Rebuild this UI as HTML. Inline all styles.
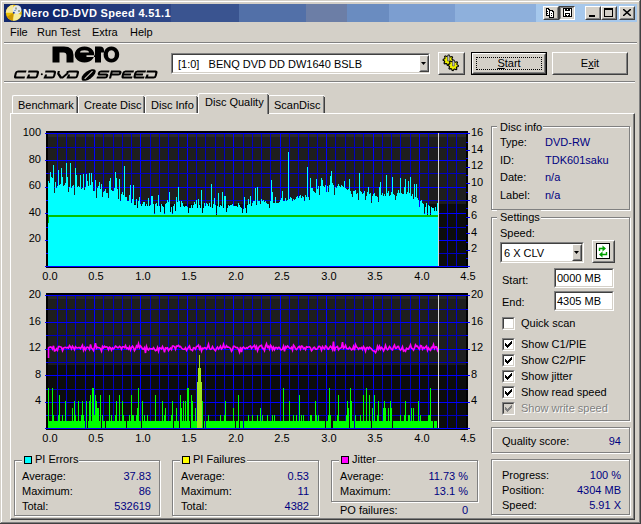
<!DOCTYPE html><html><head><meta charset="utf-8"><style>
html,body{margin:0;padding:0;width:641px;height:524px;overflow:hidden;background:#D4D0C8}
body{position:relative;font-family:'Liberation Sans', sans-serif}
</style></head><body><div style="position:absolute;left:0px;top:0px;width:641px;height:524px;background:#D4D0C8"></div>
<div style="position:absolute;left:0px;top:0px;width:641px;height:1px;background:#D4D0C8"></div>
<div style="position:absolute;left:0px;top:0px;width:1px;height:524px;background:#D4D0C8"></div>
<div style="position:absolute;left:1px;top:1px;width:639px;height:1px;background:#fff"></div>
<div style="position:absolute;left:1px;top:1px;width:1px;height:522px;background:#fff"></div>
<div style="position:absolute;left:640px;top:0px;width:1px;height:524px;background:#404040"></div>
<div style="position:absolute;left:0px;top:523px;width:641px;height:1px;background:#404040"></div>
<div style="position:absolute;left:639px;top:1px;width:1px;height:522px;background:#808080"></div>
<div style="position:absolute;left:1px;top:522px;width:639px;height:1px;background:#808080"></div>
<div style="position:absolute;left:4px;top:4px;width:86px;height:18px;background:#12286C"></div>
<div style="position:absolute;left:90px;top:4px;width:40px;height:18px;background:#233A7C"></div>
<div style="position:absolute;left:130px;top:4px;width:41px;height:18px;background:#2E4686"></div>
<div style="position:absolute;left:171px;top:4px;width:68px;height:18px;background:#3A5490"></div>
<div style="position:absolute;left:239px;top:4px;width:67px;height:18px;background:#5270A8"></div>
<div style="position:absolute;left:306px;top:4px;width:41px;height:18px;background:#6C7EA6"></div>
<div style="position:absolute;left:347px;top:4px;width:42px;height:18px;background:#6A8CC0"></div>
<div style="position:absolute;left:389px;top:4px;width:66px;height:18px;background:#7C9ED0"></div>
<div style="position:absolute;left:455px;top:4px;width:81px;height:18px;background:#8EB0DC"></div>
<div style="position:absolute;left:536px;top:4px;width:101px;height:18px;background:#A6C8EC"></div>
<div style="position:absolute;left:23px;top:7px;font:bold 11px/13px 'Liberation Sans', sans-serif;color:#fff;white-space:pre;letter-spacing:0.3px">Nero CD-DVD Speed 4.51.1</div>
<svg style="position:absolute;left:5px;top:4px" width="17" height="17" viewBox="0 0 17 17"><circle cx="8.8" cy="8.8" r="8" fill="#ECC000"/><path d="M8.8 8.8L0.80 8.80A8 8 0 0 1 8.10 0.83Z" fill="#F6E89A"/><path d="M8.8 8.8L16.53 10.87A8 8 0 0 1 8.10 16.77Z" fill="#F6EC9A"/><path d="M8.8 8.8L7.41 16.68A8 8 0 0 1 1.87 12.80Z" fill="#CC9600"/><circle cx="12" cy="5.6" r="4.4" fill="#E4E8EC"/><path d="M10 3.5h2v2h-2zM13 6h2v2h-2z" fill="#A0A890"/><path d="M9 6h2v1h-2z" fill="#80A8D8"/><circle cx="8.8" cy="8.8" r="1" fill="#2040A0"/></svg>
<div style="position:absolute;left:543px;top:6px;width:16px;height:14px;box-sizing:border-box;border-style:solid;border-width:1px;border-color:#fff #404040 #404040 #fff;background:#D4D0C8"><div style="position:absolute;left:0;top:0;right:0;bottom:0;border-style:solid;border-width:1px;border-color:#D4D0C8 #808080 #808080 #D4D0C8"></div><svg style="position:absolute;left:2px;top:1px" width="11" height="11" shape-rendering="crispEdges"><rect x="0" y="0" width="1" height="1" fill="#000"/><rect x="1" y="0" width="1" height="1" fill="#000"/><rect x="2" y="0" width="1" height="1" fill="#000"/><rect x="0" y="1" width="1" height="1" fill="#000"/><rect x="1" y="1" width="1" height="1" fill="#fff"/><rect x="2" y="1" width="1" height="1" fill="#000"/><rect x="3" y="1" width="1" height="1" fill="#000"/><rect x="0" y="2" width="1" height="1" fill="#000"/><rect x="1" y="2" width="1" height="1" fill="#fff"/><rect x="2" y="2" width="1" height="1" fill="#fff"/><rect x="3" y="2" width="1" height="1" fill="#000"/><rect x="4" y="2" width="1" height="1" fill="#000"/><rect x="5" y="2" width="1" height="1" fill="#000"/><rect x="6" y="2" width="1" height="1" fill="#000"/><rect x="0" y="3" width="1" height="1" fill="#000"/><rect x="1" y="3" width="1" height="1" fill="#000"/><rect x="2" y="3" width="1" height="1" fill="#fff"/><rect x="3" y="3" width="1" height="1" fill="#000"/><rect x="4" y="3" width="1" height="1" fill="#fff"/><rect x="5" y="3" width="1" height="1" fill="#fff"/><rect x="6" y="3" width="1" height="1" fill="#000"/><rect x="7" y="3" width="1" height="1" fill="#000"/><rect x="0" y="4" width="1" height="1" fill="#000"/><rect x="1" y="4" width="1" height="1" fill="#fff"/><rect x="2" y="4" width="1" height="1" fill="#fff"/><rect x="3" y="4" width="1" height="1" fill="#000"/><rect x="4" y="4" width="1" height="1" fill="#fff"/><rect x="5" y="4" width="1" height="1" fill="#fff"/><rect x="6" y="4" width="1" height="1" fill="#fff"/><rect x="7" y="4" width="1" height="1" fill="#000"/><rect x="0" y="5" width="1" height="1" fill="#000"/><rect x="1" y="5" width="1" height="1" fill="#000"/><rect x="2" y="5" width="1" height="1" fill="#fff"/><rect x="3" y="5" width="1" height="1" fill="#000"/><rect x="4" y="5" width="1" height="1" fill="#fff"/><rect x="5" y="5" width="1" height="1" fill="#000"/><rect x="6" y="5" width="1" height="1" fill="#fff"/><rect x="7" y="5" width="1" height="1" fill="#000"/><rect x="0" y="6" width="1" height="1" fill="#000"/><rect x="1" y="6" width="1" height="1" fill="#fff"/><rect x="2" y="6" width="1" height="1" fill="#fff"/><rect x="3" y="6" width="1" height="1" fill="#000"/><rect x="4" y="6" width="1" height="1" fill="#fff"/><rect x="5" y="6" width="1" height="1" fill="#fff"/><rect x="6" y="6" width="1" height="1" fill="#fff"/><rect x="7" y="6" width="1" height="1" fill="#000"/><rect x="0" y="7" width="1" height="1" fill="#000"/><rect x="1" y="7" width="1" height="1" fill="#000"/><rect x="2" y="7" width="1" height="1" fill="#000"/><rect x="3" y="7" width="1" height="1" fill="#000"/><rect x="4" y="7" width="1" height="1" fill="#fff"/><rect x="5" y="7" width="1" height="1" fill="#000"/><rect x="6" y="7" width="1" height="1" fill="#fff"/><rect x="7" y="7" width="1" height="1" fill="#000"/><rect x="3" y="8" width="1" height="1" fill="#000"/><rect x="4" y="8" width="1" height="1" fill="#fff"/><rect x="5" y="8" width="1" height="1" fill="#fff"/><rect x="6" y="8" width="1" height="1" fill="#fff"/><rect x="7" y="8" width="1" height="1" fill="#000"/><rect x="3" y="9" width="1" height="1" fill="#000"/><rect x="4" y="9" width="1" height="1" fill="#000"/><rect x="5" y="9" width="1" height="1" fill="#000"/><rect x="6" y="9" width="1" height="1" fill="#000"/><rect x="7" y="9" width="1" height="1" fill="#000"/></svg></div>
<div style="position:absolute;left:559px;top:6px;width:16px;height:14px;box-sizing:border-box;border-style:solid;border-width:1px;border-color:#404040 #fff #fff #404040;background:#E0DDD8"><div style="position:absolute;left:0;top:0;right:0;bottom:0;border-style:solid;border-width:1px;border-color:#808080 #D4D0C8 #D4D0C8 #808080"></div><svg style="position:absolute;left:3px;top:1px" width="11" height="11" shape-rendering="crispEdges"><rect x="0" y="0" width="1" height="1" fill="#000"/><rect x="1" y="0" width="1" height="1" fill="#000"/><rect x="2" y="0" width="1" height="1" fill="#000"/><rect x="3" y="0" width="1" height="1" fill="#000"/><rect x="4" y="0" width="1" height="1" fill="#000"/><rect x="5" y="0" width="1" height="1" fill="#000"/><rect x="6" y="0" width="1" height="1" fill="#000"/><rect x="7" y="0" width="1" height="1" fill="#000"/><rect x="8" y="0" width="1" height="1" fill="#000"/><rect x="0" y="1" width="1" height="1" fill="#000"/><rect x="1" y="1" width="1" height="1" fill="#fff"/><rect x="2" y="1" width="1" height="1" fill="#000"/><rect x="3" y="1" width="1" height="1" fill="#000"/><rect x="4" y="1" width="1" height="1" fill="#fff"/><rect x="5" y="1" width="1" height="1" fill="#000"/><rect x="6" y="1" width="1" height="1" fill="#000"/><rect x="7" y="1" width="1" height="1" fill="#fff"/><rect x="8" y="1" width="1" height="1" fill="#000"/><rect x="0" y="2" width="1" height="1" fill="#000"/><rect x="1" y="2" width="1" height="1" fill="#fff"/><rect x="2" y="2" width="1" height="1" fill="#000"/><rect x="3" y="2" width="1" height="1" fill="#000"/><rect x="4" y="2" width="1" height="1" fill="#000"/><rect x="5" y="2" width="1" height="1" fill="#000"/><rect x="6" y="2" width="1" height="1" fill="#000"/><rect x="7" y="2" width="1" height="1" fill="#fff"/><rect x="8" y="2" width="1" height="1" fill="#000"/><rect x="0" y="3" width="1" height="1" fill="#000"/><rect x="1" y="3" width="1" height="1" fill="#fff"/><rect x="2" y="3" width="1" height="1" fill="#fff"/><rect x="3" y="3" width="1" height="1" fill="#fff"/><rect x="4" y="3" width="1" height="1" fill="#fff"/><rect x="5" y="3" width="1" height="1" fill="#fff"/><rect x="6" y="3" width="1" height="1" fill="#fff"/><rect x="7" y="3" width="1" height="1" fill="#fff"/><rect x="8" y="3" width="1" height="1" fill="#000"/><rect x="0" y="4" width="1" height="1" fill="#000"/><rect x="1" y="4" width="1" height="1" fill="#fff"/><rect x="2" y="4" width="1" height="1" fill="#fff"/><rect x="3" y="4" width="1" height="1" fill="#fff"/><rect x="4" y="4" width="1" height="1" fill="#fff"/><rect x="5" y="4" width="1" height="1" fill="#fff"/><rect x="6" y="4" width="1" height="1" fill="#fff"/><rect x="7" y="4" width="1" height="1" fill="#fff"/><rect x="8" y="4" width="1" height="1" fill="#000"/><rect x="0" y="5" width="1" height="1" fill="#000"/><rect x="1" y="5" width="1" height="1" fill="#fff"/><rect x="2" y="5" width="1" height="1" fill="#000"/><rect x="3" y="5" width="1" height="1" fill="#000"/><rect x="4" y="5" width="1" height="1" fill="#000"/><rect x="5" y="5" width="1" height="1" fill="#000"/><rect x="6" y="5" width="1" height="1" fill="#000"/><rect x="7" y="5" width="1" height="1" fill="#fff"/><rect x="8" y="5" width="1" height="1" fill="#000"/><rect x="0" y="6" width="1" height="1" fill="#000"/><rect x="1" y="6" width="1" height="1" fill="#fff"/><rect x="2" y="6" width="1" height="1" fill="#000"/><rect x="3" y="6" width="1" height="1" fill="#fff"/><rect x="4" y="6" width="1" height="1" fill="#fff"/><rect x="5" y="6" width="1" height="1" fill="#fff"/><rect x="6" y="6" width="1" height="1" fill="#000"/><rect x="7" y="6" width="1" height="1" fill="#fff"/><rect x="8" y="6" width="1" height="1" fill="#000"/><rect x="0" y="7" width="1" height="1" fill="#000"/><rect x="1" y="7" width="1" height="1" fill="#fff"/><rect x="2" y="7" width="1" height="1" fill="#000"/><rect x="3" y="7" width="1" height="1" fill="#000"/><rect x="4" y="7" width="1" height="1" fill="#fff"/><rect x="5" y="7" width="1" height="1" fill="#000"/><rect x="6" y="7" width="1" height="1" fill="#000"/><rect x="7" y="7" width="1" height="1" fill="#fff"/><rect x="8" y="7" width="1" height="1" fill="#000"/><rect x="0" y="8" width="1" height="1" fill="#000"/><rect x="1" y="8" width="1" height="1" fill="#000"/><rect x="2" y="8" width="1" height="1" fill="#000"/><rect x="3" y="8" width="1" height="1" fill="#000"/><rect x="4" y="8" width="1" height="1" fill="#000"/><rect x="5" y="8" width="1" height="1" fill="#000"/><rect x="6" y="8" width="1" height="1" fill="#000"/><rect x="7" y="8" width="1" height="1" fill="#000"/><rect x="8" y="8" width="1" height="1" fill="#000"/></svg></div>
<div style="position:absolute;left:585px;top:6px;width:16px;height:14px;box-sizing:border-box;border-style:solid;border-width:1px;border-color:#fff #404040 #404040 #fff;background:#D4D0C8"><div style="position:absolute;left:0;top:0;right:0;bottom:0;border-style:solid;border-width:1px;border-color:#D4D0C8 #808080 #808080 #D4D0C8"></div><div style="position:absolute;left:3px;top:8px;width:6px;height:2px;background:#000"></div></div>
<div style="position:absolute;left:601px;top:6px;width:16px;height:14px;box-sizing:border-box;border-style:solid;border-width:1px;border-color:#fff #404040 #404040 #fff;background:#D4D0C8"><div style="position:absolute;left:0;top:0;right:0;bottom:0;border-style:solid;border-width:1px;border-color:#D4D0C8 #808080 #808080 #D4D0C8"></div><div style="position:absolute;left:2px;top:1px;width:9px;height:9px;box-sizing:border-box;border:1px solid #000;border-top-width:2px"></div></div>
<div style="position:absolute;left:619px;top:6px;width:16px;height:14px;box-sizing:border-box;border-style:solid;border-width:1px;border-color:#fff #404040 #404040 #fff;background:#D4D0C8"><div style="position:absolute;left:0;top:0;right:0;bottom:0;border-style:solid;border-width:1px;border-color:#D4D0C8 #808080 #808080 #D4D0C8"></div><svg style="position:absolute;left:3px;top:2px" width="8" height="7" viewBox="0 0 8 7"><path d="M0 0L8 7M8 0L0 7" stroke="#000" stroke-width="1.5"/></svg></div>
<div style="position:absolute;left:10px;top:26px;font:normal 11px/13px 'Liberation Sans', sans-serif;color:#000;white-space:pre;">File</div>
<div style="position:absolute;left:37px;top:26px;font:normal 11px/13px 'Liberation Sans', sans-serif;color:#000;white-space:pre;">Run Test</div>
<div style="position:absolute;left:92px;top:26px;font:normal 11px/13px 'Liberation Sans', sans-serif;color:#000;white-space:pre;">Extra</div>
<div style="position:absolute;left:130px;top:26px;font:normal 11px/13px 'Liberation Sans', sans-serif;color:#000;white-space:pre;">Help</div>
<div style="position:absolute;left:4px;top:42px;width:633px;height:1px;background:#808080"></div>
<div style="position:absolute;left:4px;top:43px;width:633px;height:1px;background:#fff"></div>
<svg style="position:absolute;left:0;top:0" width="170" height="84" viewBox="0 0 170 84">
<path fill="#000" fill-rule="evenodd" d="M52.5 62.5V46.5H64Q73.5 46.5 73.5 55V62.5H66.5V55.5Q66.5 52.5 63.5 52.5H59.5V62.5Z"/>
<path fill="#000" fill-rule="evenodd" d="M84.5 46.5A9.8 8 0 1 0 84.51 46.5ZM80 52.6A4.5 2.4 0 0 1 89 52.6ZM86.5 55.2H95V57H86.5Z"/>
<path fill="#000" d="M95 62.5V46.5H100Q104 46.5 104 50.5V52.5H101V62.5Z"/>
<path fill="#000" fill-rule="evenodd" d="M111.4 46.5A7.8 8 0 1 0 111.41 46.5ZM111.4 50.2A3.6 4.3 0 1 1 111.39 50.2Z"/>
<path transform="translate(15.5,70.5) skewX(-14)" d="M11 1H2.5Q1 1 1 2.5V5.5Q1 7 2.5 7H11" fill="none" stroke="#000" stroke-width="2.1"/><path transform="translate(28.5,70.5) skewX(-14)" d="M0 1H8.5Q10 1 10 2.5V5.5Q10 7 8.5 7H0M1.5 4V7" fill="none" stroke="#000" stroke-width="2.1"/><path transform="translate(45.5,70.5) skewX(-14)" d="M0 1H8.5Q10 1 10 2.5V5.5Q10 7 8.5 7H0M1.5 4V7" fill="none" stroke="#000" stroke-width="2.1"/><path transform="translate(58,70.5) skewX(-14)" d="M1 0.5V3L4.5 7H6.5L10 3V0.5" fill="none" stroke="#000" stroke-width="2.1"/><path transform="translate(68.5,70.5) skewX(-14)" d="M0 1H8.5Q10 1 10 2.5V5.5Q10 7 8.5 7H0M1.5 4V7" fill="none" stroke="#000" stroke-width="2.1"/><path transform="translate(98.5,70.5) skewX(-14)" d="M11 1H2.5Q1 1 1 2.5Q1 4 2.5 4H8.5Q10 4 10 5.5Q10 7 8.5 7H0" fill="none" stroke="#000" stroke-width="2.1"/><path transform="translate(111,70.5) skewX(-14)" d="M1 8V1H8.5Q10 1 10 2.5Q10 4 8.5 4H2" fill="none" stroke="#000" stroke-width="2.1"/><path transform="translate(123,70.5) skewX(-14)" d="M11 1H2.5Q1 1 1 2.5V5.5Q1 7 2.5 7H11M2 4H9" fill="none" stroke="#000" stroke-width="2.1"/><path transform="translate(135,70.5) skewX(-14)" d="M11 1H2.5Q1 1 1 2.5V5.5Q1 7 2.5 7H11M2 4H9" fill="none" stroke="#000" stroke-width="2.1"/><path transform="translate(147,70.5) skewX(-14)" d="M0 1H8.5Q10 1 10 2.5V5.5Q10 7 8.5 7H0M1.5 4V7" fill="none" stroke="#000" stroke-width="2.1"/>
<circle cx="41.8" cy="74.2" r="1" fill="#000"/>
<g transform="translate(88.6,75) rotate(-36)"><ellipse rx="8.4" ry="3.9" fill="#000"/><path d="M-5.5 0.9 L5.5 -0.9" stroke="#D4D0C8" stroke-width="1"/></g>
</svg>
<div style="position:absolute;left:4px;top:81px;width:631px;height:1px;background:#808080"></div>
<div style="position:absolute;left:4px;top:82px;width:631px;height:1px;background:#fff"></div>
<div style="position:absolute;left:171px;top:53px;width:259px;height:21px;box-sizing:border-box;border-style:solid;border-width:1px;border-color:#808080 #fff #fff #808080;background:#fff"><div style="position:absolute;left:0;top:0;right:0;bottom:0;border-style:solid;border-width:1px;border-color:#404040 #D4D0C8 #D4D0C8 #404040"></div></div>
<div style="position:absolute;left:178px;top:58px;font:normal 11px/13px 'Liberation Sans', sans-serif;color:#000;white-space:pre;">[1:0]   BENQ DVD DD DW1640 BSLB</div>
<div style="position:absolute;left:419px;top:55px;width:10px;height:17px;box-sizing:border-box;border-style:solid;border-width:1px;border-color:#fff #404040 #404040 #fff;background:#D4D0C8"><div style="position:absolute;left:0;top:0;right:0;bottom:0;border-style:solid;border-width:1px;border-color:#D4D0C8 #808080 #808080 #D4D0C8"></div><svg style="position:absolute;left:1px;top:6px" width="6" height="4"><path d="M0 0h5L2.5 3Z" fill="#000"/></svg></div>
<div style="position:absolute;left:438px;top:52px;width:27px;height:23px;box-sizing:border-box;border-style:solid;border-width:1px;border-color:#fff #404040 #404040 #fff;background:#D4D0C8"><div style="position:absolute;left:0;top:0;right:0;bottom:0;border-style:solid;border-width:1px;border-color:#D4D0C8 #808080 #808080 #D4D0C8"></div><svg style="position:absolute;left:-1px;top:-1px" width="27" height="23" viewBox="0 0 27 23"><polygon points="15.50,8.20 15.40,9.21 13.90,9.69 13.54,10.37 13.98,11.88 13.19,12.52 11.79,11.80 11.06,12.03 10.30,13.40 9.29,13.30 8.81,11.80 8.13,11.44 6.62,11.88 5.98,11.09 6.70,9.69 6.47,8.96 5.10,8.20 5.20,7.19 6.70,6.71 7.06,6.03 6.62,4.52 7.41,3.88 8.81,4.60 9.54,4.37 10.30,3.00 11.31,3.10 11.79,4.60 12.47,4.96 13.98,4.52 14.62,5.31 13.90,6.71 14.13,7.44" fill="#F0F000" stroke="#000" stroke-width="1.1" stroke-linejoin="round"/><polygon points="20.40,13.40 20.30,14.41 18.80,14.89 18.44,15.57 18.88,17.08 18.09,17.72 16.69,17.00 15.96,17.23 15.20,18.60 14.19,18.50 13.71,17.00 13.03,16.64 11.52,17.08 10.88,16.29 11.60,14.89 11.37,14.16 10.00,13.40 10.10,12.39 11.60,11.91 11.96,11.23 11.52,9.72 12.31,9.08 13.71,9.80 14.44,9.57 15.20,8.20 16.21,8.30 16.69,9.80 17.37,10.16 18.88,9.72 19.52,10.51 18.80,11.91 19.03,12.64" fill="#F0F000" stroke="#000" stroke-width="1.1" stroke-linejoin="round"/><path d="M9.5 3.5h1.8v5.5h-1.8zM14.5 8.5h1.8v5.5h-1.8z" fill="#C8C8D0" stroke="#404040" stroke-width="0.6"/></svg></div>
<div style="position:absolute;left:471px;top:52px;width:76px;height:23px;box-sizing:border-box;border:1px solid #000"></div>
<div style="position:absolute;left:472px;top:53px;width:74px;height:21px;box-sizing:border-box;border-style:solid;border-width:1px;border-color:#fff #404040 #404040 #fff;background:#D4D0C8"><div style="position:absolute;left:0;top:0;right:0;bottom:0;border-style:solid;border-width:1px;border-color:#D4D0C8 #808080 #808080 #D4D0C8"></div><div style="position:absolute;left:3px;top:3px;width:66px;height:13px;box-sizing:border-box;border:1px dotted #000"></div><div style="position:absolute;left:0;width:72px;top:3px;text-align:center;font:11px/13px 'Liberation Sans', sans-serif"><u>S</u>tart</div></div>
<div style="position:absolute;left:552px;top:52px;width:76px;height:23px;box-sizing:border-box;border-style:solid;border-width:1px;border-color:#fff #404040 #404040 #fff;background:#D4D0C8"><div style="position:absolute;left:0;top:0;right:0;bottom:0;border-style:solid;border-width:1px;border-color:#D4D0C8 #808080 #808080 #D4D0C8"></div><div style="position:absolute;left:0;width:74px;top:4px;text-align:center;font:11px/13px 'Liberation Sans', sans-serif">E<u>x</u>it</div></div>
<div style="position:absolute;left:10px;top:113px;width:625px;height:407px;box-sizing:border-box;border-style:solid;border-width:1px;border-color:#fff #404040 #404040 #fff"></div>
<div style="position:absolute;left:11px;top:114px;width:623px;height:405px;box-sizing:border-box;border-style:solid;border-width:0 1px 1px 0;border-color:#808080"></div>
<div style="position:absolute;left:12px;top:95px;width:66px;height:18px;background:#D4D0C8;box-sizing:border-box;border-style:solid;border-width:1px 0 0 1px;border-color:#fff;border-radius:2px 2px 0 0"></div>
<div style="position:absolute;left:76px;top:96px;width:1px;height:17px;background:#808080"></div>
<div style="position:absolute;left:77px;top:97px;width:1px;height:16px;background:#404040"></div>
<div style="position:absolute;left:18px;top:99px;font:normal 11px/13px 'Liberation Sans', sans-serif;color:#000;white-space:pre;">Benchmark</div>
<div style="position:absolute;left:78px;top:95px;width:67px;height:18px;background:#D4D0C8;box-sizing:border-box;border-style:solid;border-width:1px 0 0 1px;border-color:#fff;border-radius:2px 2px 0 0"></div>
<div style="position:absolute;left:143px;top:96px;width:1px;height:17px;background:#808080"></div>
<div style="position:absolute;left:144px;top:97px;width:1px;height:16px;background:#404040"></div>
<div style="position:absolute;left:84px;top:99px;font:normal 11px/13px 'Liberation Sans', sans-serif;color:#000;white-space:pre;">Create Disc</div>
<div style="position:absolute;left:145px;top:95px;width:53px;height:18px;background:#D4D0C8;box-sizing:border-box;border-style:solid;border-width:1px 0 0 1px;border-color:#fff;border-radius:2px 2px 0 0"></div>
<div style="position:absolute;left:196px;top:96px;width:1px;height:17px;background:#808080"></div>
<div style="position:absolute;left:197px;top:97px;width:1px;height:16px;background:#404040"></div>
<div style="position:absolute;left:151px;top:99px;font:normal 11px/13px 'Liberation Sans', sans-serif;color:#000;white-space:pre;">Disc Info</div>
<div style="position:absolute;left:268px;top:95px;width:57px;height:18px;background:#D4D0C8;box-sizing:border-box;border-style:solid;border-width:1px 0 0 1px;border-color:#fff;border-radius:2px 2px 0 0"></div>
<div style="position:absolute;left:323px;top:96px;width:1px;height:17px;background:#808080"></div>
<div style="position:absolute;left:324px;top:97px;width:1px;height:16px;background:#404040"></div>
<div style="position:absolute;left:274px;top:99px;font:normal 11px/13px 'Liberation Sans', sans-serif;color:#000;white-space:pre;">ScanDisc</div>
<div style="position:absolute;left:198px;top:93px;width:71px;height:21px;background:#D4D0C8;box-sizing:border-box;border-style:solid;border-width:1px 0 0 1px;border-color:#fff;border-radius:2px 2px 0 0"></div>
<div style="position:absolute;left:267px;top:94px;width:1px;height:20px;background:#808080"></div>
<div style="position:absolute;left:268px;top:95px;width:1px;height:19px;background:#404040"></div>
<div style="position:absolute;left:205px;top:96px;font:normal 11px/13px 'Liberation Sans', sans-serif;color:#000;white-space:pre;">Disc Quality</div>
<div style="position:absolute;left:199px;top:113px;width:68px;height:2px;background:#D4D0C8"></div>
<div style="position:absolute;right:600px;top:126px;font:normal 11px/13px 'Liberation Sans', sans-serif;color:#000;white-space:pre;text-align:right;">100</div>
<div style="position:absolute;right:600px;top:153px;font:normal 11px/13px 'Liberation Sans', sans-serif;color:#000;white-space:pre;text-align:right;">80</div>
<div style="position:absolute;right:600px;top:179px;font:normal 11px/13px 'Liberation Sans', sans-serif;color:#000;white-space:pre;text-align:right;">60</div>
<div style="position:absolute;right:600px;top:206px;font:normal 11px/13px 'Liberation Sans', sans-serif;color:#000;white-space:pre;text-align:right;">40</div>
<div style="position:absolute;right:600px;top:232px;font:normal 11px/13px 'Liberation Sans', sans-serif;color:#000;white-space:pre;text-align:right;">20</div>
<div style="position:absolute;left:471px;top:126px;font:normal 11px/13px 'Liberation Sans', sans-serif;color:#000;white-space:pre;">16</div>
<div style="position:absolute;left:471px;top:143px;font:normal 11px/13px 'Liberation Sans', sans-serif;color:#000;white-space:pre;">14</div>
<div style="position:absolute;left:471px;top:159px;font:normal 11px/13px 'Liberation Sans', sans-serif;color:#000;white-space:pre;">12</div>
<div style="position:absolute;left:471px;top:176px;font:normal 11px/13px 'Liberation Sans', sans-serif;color:#000;white-space:pre;">10</div>
<div style="position:absolute;left:471px;top:193px;font:normal 11px/13px 'Liberation Sans', sans-serif;color:#000;white-space:pre;">8</div>
<div style="position:absolute;left:471px;top:209px;font:normal 11px/13px 'Liberation Sans', sans-serif;color:#000;white-space:pre;">6</div>
<div style="position:absolute;left:471px;top:226px;font:normal 11px/13px 'Liberation Sans', sans-serif;color:#000;white-space:pre;">4</div>
<div style="position:absolute;left:471px;top:242px;font:normal 11px/13px 'Liberation Sans', sans-serif;color:#000;white-space:pre;">2</div>
<div style="position:absolute;right:600px;top:288px;font:normal 11px/13px 'Liberation Sans', sans-serif;color:#000;white-space:pre;text-align:right;">20</div>
<div style="position:absolute;right:600px;top:315px;font:normal 11px/13px 'Liberation Sans', sans-serif;color:#000;white-space:pre;text-align:right;">16</div>
<div style="position:absolute;right:600px;top:341px;font:normal 11px/13px 'Liberation Sans', sans-serif;color:#000;white-space:pre;text-align:right;">12</div>
<div style="position:absolute;right:600px;top:368px;font:normal 11px/13px 'Liberation Sans', sans-serif;color:#000;white-space:pre;text-align:right;">8</div>
<div style="position:absolute;right:600px;top:394px;font:normal 11px/13px 'Liberation Sans', sans-serif;color:#000;white-space:pre;text-align:right;">4</div>
<div style="position:absolute;left:471px;top:288px;font:normal 11px/13px 'Liberation Sans', sans-serif;color:#000;white-space:pre;">20</div>
<div style="position:absolute;left:471px;top:315px;font:normal 11px/13px 'Liberation Sans', sans-serif;color:#000;white-space:pre;">16</div>
<div style="position:absolute;left:471px;top:341px;font:normal 11px/13px 'Liberation Sans', sans-serif;color:#000;white-space:pre;">12</div>
<div style="position:absolute;left:471px;top:368px;font:normal 11px/13px 'Liberation Sans', sans-serif;color:#000;white-space:pre;">8</div>
<div style="position:absolute;left:471px;top:394px;font:normal 11px/13px 'Liberation Sans', sans-serif;color:#000;white-space:pre;">4</div>
<div style="position:absolute;left:10px;width:80px;top:270px;font:normal 11px/13px 'Liberation Sans', sans-serif;color:#000;white-space:pre;text-align:center">0.0</div>
<div style="position:absolute;left:10px;width:80px;top:432px;font:normal 11px/13px 'Liberation Sans', sans-serif;color:#000;white-space:pre;text-align:center">0.0</div>
<div style="position:absolute;left:56px;width:80px;top:270px;font:normal 11px/13px 'Liberation Sans', sans-serif;color:#000;white-space:pre;text-align:center">0.5</div>
<div style="position:absolute;left:56px;width:80px;top:432px;font:normal 11px/13px 'Liberation Sans', sans-serif;color:#000;white-space:pre;text-align:center">0.5</div>
<div style="position:absolute;left:103px;width:80px;top:270px;font:normal 11px/13px 'Liberation Sans', sans-serif;color:#000;white-space:pre;text-align:center">1.0</div>
<div style="position:absolute;left:103px;width:80px;top:432px;font:normal 11px/13px 'Liberation Sans', sans-serif;color:#000;white-space:pre;text-align:center">1.0</div>
<div style="position:absolute;left:149px;width:80px;top:270px;font:normal 11px/13px 'Liberation Sans', sans-serif;color:#000;white-space:pre;text-align:center">1.5</div>
<div style="position:absolute;left:149px;width:80px;top:432px;font:normal 11px/13px 'Liberation Sans', sans-serif;color:#000;white-space:pre;text-align:center">1.5</div>
<div style="position:absolute;left:196px;width:80px;top:270px;font:normal 11px/13px 'Liberation Sans', sans-serif;color:#000;white-space:pre;text-align:center">2.0</div>
<div style="position:absolute;left:196px;width:80px;top:432px;font:normal 11px/13px 'Liberation Sans', sans-serif;color:#000;white-space:pre;text-align:center">2.0</div>
<div style="position:absolute;left:242px;width:80px;top:270px;font:normal 11px/13px 'Liberation Sans', sans-serif;color:#000;white-space:pre;text-align:center">2.5</div>
<div style="position:absolute;left:242px;width:80px;top:432px;font:normal 11px/13px 'Liberation Sans', sans-serif;color:#000;white-space:pre;text-align:center">2.5</div>
<div style="position:absolute;left:289px;width:80px;top:270px;font:normal 11px/13px 'Liberation Sans', sans-serif;color:#000;white-space:pre;text-align:center">3.0</div>
<div style="position:absolute;left:289px;width:80px;top:432px;font:normal 11px/13px 'Liberation Sans', sans-serif;color:#000;white-space:pre;text-align:center">3.0</div>
<div style="position:absolute;left:335px;width:80px;top:270px;font:normal 11px/13px 'Liberation Sans', sans-serif;color:#000;white-space:pre;text-align:center">3.5</div>
<div style="position:absolute;left:335px;width:80px;top:432px;font:normal 11px/13px 'Liberation Sans', sans-serif;color:#000;white-space:pre;text-align:center">3.5</div>
<div style="position:absolute;left:382px;width:80px;top:270px;font:normal 11px/13px 'Liberation Sans', sans-serif;color:#000;white-space:pre;text-align:center">4.0</div>
<div style="position:absolute;left:382px;width:80px;top:432px;font:normal 11px/13px 'Liberation Sans', sans-serif;color:#000;white-space:pre;text-align:center">4.0</div>
<div style="position:absolute;left:428px;width:80px;top:270px;font:normal 11px/13px 'Liberation Sans', sans-serif;color:#000;white-space:pre;text-align:center">4.5</div>
<div style="position:absolute;left:428px;width:80px;top:432px;font:normal 11px/13px 'Liberation Sans', sans-serif;color:#000;white-space:pre;text-align:center">4.5</div>
<svg style="position:absolute;left:0;top:0" width="641" height="524" shape-rendering="crispEdges"><rect x="46" y="131" width="422" height="137" fill="#000"/><rect x="48" y="133" width="418" height="71" fill="#1E1E1E"/><rect x="48" y="134" width="418" height="3" fill="#2A2A2A"/><rect x="48" y="204" width="418" height="62" fill="#0C0C0C"/><rect x="57" y="133" width="1" height="133" fill="#0000C0"/><rect x="66" y="133" width="1" height="133" fill="#0000C0"/><rect x="75" y="133" width="1" height="133" fill="#0000C0"/><rect x="85" y="133" width="1" height="133" fill="#0000C0"/><rect x="94" y="133" width="1" height="133" fill="#0000FF"/><rect x="103" y="133" width="1" height="133" fill="#0000C0"/><rect x="113" y="133" width="1" height="133" fill="#0000C0"/><rect x="122" y="133" width="1" height="133" fill="#0000C0"/><rect x="131" y="133" width="1" height="133" fill="#0000C0"/><rect x="140" y="133" width="1" height="133" fill="#0000FF"/><rect x="150" y="133" width="1" height="133" fill="#0000C0"/><rect x="159" y="133" width="1" height="133" fill="#0000C0"/><rect x="168" y="133" width="1" height="133" fill="#0000C0"/><rect x="178" y="133" width="1" height="133" fill="#0000C0"/><rect x="187" y="133" width="1" height="133" fill="#0000FF"/><rect x="196" y="133" width="1" height="133" fill="#0000C0"/><rect x="205" y="133" width="1" height="133" fill="#0000C0"/><rect x="215" y="133" width="1" height="133" fill="#0000C0"/><rect x="224" y="133" width="1" height="133" fill="#0000C0"/><rect x="233" y="133" width="1" height="133" fill="#0000FF"/><rect x="243" y="133" width="1" height="133" fill="#0000C0"/><rect x="252" y="133" width="1" height="133" fill="#0000C0"/><rect x="261" y="133" width="1" height="133" fill="#0000C0"/><rect x="270" y="133" width="1" height="133" fill="#0000C0"/><rect x="280" y="133" width="1" height="133" fill="#0000FF"/><rect x="289" y="133" width="1" height="133" fill="#0000C0"/><rect x="298" y="133" width="1" height="133" fill="#0000C0"/><rect x="308" y="133" width="1" height="133" fill="#0000C0"/><rect x="317" y="133" width="1" height="133" fill="#0000C0"/><rect x="326" y="133" width="1" height="133" fill="#0000FF"/><rect x="335" y="133" width="1" height="133" fill="#0000C0"/><rect x="345" y="133" width="1" height="133" fill="#0000C0"/><rect x="354" y="133" width="1" height="133" fill="#0000C0"/><rect x="363" y="133" width="1" height="133" fill="#0000C0"/><rect x="373" y="133" width="1" height="133" fill="#0000FF"/><rect x="382" y="133" width="1" height="133" fill="#0000C0"/><rect x="391" y="133" width="1" height="133" fill="#0000C0"/><rect x="400" y="133" width="1" height="133" fill="#0000C0"/><rect x="410" y="133" width="1" height="133" fill="#0000C0"/><rect x="419" y="133" width="1" height="133" fill="#0000FF"/><rect x="428" y="133" width="1" height="133" fill="#0000C0"/><rect x="438" y="133" width="1" height="133" fill="#0000C0"/><rect x="447" y="133" width="1" height="133" fill="#0000C0"/><rect x="456" y="133" width="1" height="133" fill="#0000C0"/><rect x="48" y="133" width="418" height="1" fill="#0000FF"/><rect x="45" y="133" width="3" height="1" fill="#0000FF"/><rect x="48" y="147" width="418" height="1" fill="#0000C0"/><rect x="46" y="147" width="2" height="1" fill="#0000FF"/><rect x="48" y="160" width="418" height="1" fill="#0000FF"/><rect x="45" y="160" width="3" height="1" fill="#0000FF"/><rect x="48" y="173" width="418" height="1" fill="#0000C0"/><rect x="46" y="173" width="2" height="1" fill="#0000FF"/><rect x="48" y="187" width="418" height="1" fill="#0000FF"/><rect x="45" y="187" width="3" height="1" fill="#0000FF"/><rect x="48" y="200" width="418" height="1" fill="#0000C0"/><rect x="46" y="200" width="2" height="1" fill="#0000FF"/><rect x="48" y="213" width="418" height="1" fill="#0000FF"/><rect x="45" y="213" width="3" height="1" fill="#0000FF"/><rect x="48" y="227" width="418" height="1" fill="#0000C0"/><rect x="46" y="227" width="2" height="1" fill="#0000FF"/><rect x="48" y="240" width="418" height="1" fill="#0000FF"/><rect x="45" y="240" width="3" height="1" fill="#0000FF"/><rect x="48" y="253" width="418" height="1" fill="#0000C0"/><rect x="46" y="253" width="2" height="1" fill="#0000FF"/><rect x="48" y="266" width="418" height="1" fill="#0000FF"/><rect x="45" y="266" width="3" height="1" fill="#0000FF"/><rect x="466" y="133" width="4" height="1" fill="#0000FF"/><rect x="466" y="142" width="2" height="1" fill="#0000FF"/><rect x="466" y="150" width="4" height="1" fill="#0000FF"/><rect x="466" y="158" width="2" height="1" fill="#0000FF"/><rect x="466" y="167" width="4" height="1" fill="#0000FF"/><rect x="466" y="175" width="2" height="1" fill="#0000FF"/><rect x="466" y="183" width="4" height="1" fill="#0000FF"/><rect x="466" y="192" width="2" height="1" fill="#0000FF"/><rect x="466" y="200" width="4" height="1" fill="#0000FF"/><rect x="466" y="208" width="2" height="1" fill="#0000FF"/><rect x="466" y="217" width="4" height="1" fill="#0000FF"/><rect x="466" y="225" width="2" height="1" fill="#0000FF"/><rect x="466" y="233" width="4" height="1" fill="#0000FF"/><rect x="466" y="242" width="2" height="1" fill="#0000FF"/><rect x="466" y="250" width="4" height="1" fill="#0000FF"/><rect x="466" y="258" width="2" height="1" fill="#0000FF"/><rect x="466" y="266" width="4" height="1" fill="#0000FF"/><rect x="46" y="293" width="422" height="137" fill="#000"/><rect x="48" y="295" width="418" height="70" fill="#1E1E1E"/><rect x="48" y="296" width="418" height="3" fill="#2A2A2A"/><rect x="48" y="365" width="418" height="63" fill="#0C0C0C"/><rect x="57" y="295" width="1" height="133" fill="#0000C0"/><rect x="66" y="295" width="1" height="133" fill="#0000C0"/><rect x="75" y="295" width="1" height="133" fill="#0000C0"/><rect x="85" y="295" width="1" height="133" fill="#0000C0"/><rect x="94" y="295" width="1" height="133" fill="#0000FF"/><rect x="103" y="295" width="1" height="133" fill="#0000C0"/><rect x="113" y="295" width="1" height="133" fill="#0000C0"/><rect x="122" y="295" width="1" height="133" fill="#0000C0"/><rect x="131" y="295" width="1" height="133" fill="#0000C0"/><rect x="140" y="295" width="1" height="133" fill="#0000FF"/><rect x="150" y="295" width="1" height="133" fill="#0000C0"/><rect x="159" y="295" width="1" height="133" fill="#0000C0"/><rect x="168" y="295" width="1" height="133" fill="#0000C0"/><rect x="178" y="295" width="1" height="133" fill="#0000C0"/><rect x="187" y="295" width="1" height="133" fill="#0000FF"/><rect x="196" y="295" width="1" height="133" fill="#0000C0"/><rect x="205" y="295" width="1" height="133" fill="#0000C0"/><rect x="215" y="295" width="1" height="133" fill="#0000C0"/><rect x="224" y="295" width="1" height="133" fill="#0000C0"/><rect x="233" y="295" width="1" height="133" fill="#0000FF"/><rect x="243" y="295" width="1" height="133" fill="#0000C0"/><rect x="252" y="295" width="1" height="133" fill="#0000C0"/><rect x="261" y="295" width="1" height="133" fill="#0000C0"/><rect x="270" y="295" width="1" height="133" fill="#0000C0"/><rect x="280" y="295" width="1" height="133" fill="#0000FF"/><rect x="289" y="295" width="1" height="133" fill="#0000C0"/><rect x="298" y="295" width="1" height="133" fill="#0000C0"/><rect x="308" y="295" width="1" height="133" fill="#0000C0"/><rect x="317" y="295" width="1" height="133" fill="#0000C0"/><rect x="326" y="295" width="1" height="133" fill="#0000FF"/><rect x="335" y="295" width="1" height="133" fill="#0000C0"/><rect x="345" y="295" width="1" height="133" fill="#0000C0"/><rect x="354" y="295" width="1" height="133" fill="#0000C0"/><rect x="363" y="295" width="1" height="133" fill="#0000C0"/><rect x="373" y="295" width="1" height="133" fill="#0000FF"/><rect x="382" y="295" width="1" height="133" fill="#0000C0"/><rect x="391" y="295" width="1" height="133" fill="#0000C0"/><rect x="400" y="295" width="1" height="133" fill="#0000C0"/><rect x="410" y="295" width="1" height="133" fill="#0000C0"/><rect x="419" y="295" width="1" height="133" fill="#0000FF"/><rect x="428" y="295" width="1" height="133" fill="#0000C0"/><rect x="438" y="295" width="1" height="133" fill="#0000C0"/><rect x="447" y="295" width="1" height="133" fill="#0000C0"/><rect x="456" y="295" width="1" height="133" fill="#0000C0"/><rect x="48" y="295" width="418" height="1" fill="#0000FF"/><rect x="45" y="295" width="3" height="1" fill="#0000FF"/><rect x="48" y="309" width="418" height="1" fill="#0000C0"/><rect x="46" y="309" width="2" height="1" fill="#0000FF"/><rect x="48" y="322" width="418" height="1" fill="#0000FF"/><rect x="45" y="322" width="3" height="1" fill="#0000FF"/><rect x="48" y="335" width="418" height="1" fill="#0000C0"/><rect x="46" y="335" width="2" height="1" fill="#0000FF"/><rect x="48" y="349" width="418" height="1" fill="#0000FF"/><rect x="45" y="349" width="3" height="1" fill="#0000FF"/><rect x="48" y="362" width="418" height="1" fill="#0000C0"/><rect x="46" y="362" width="2" height="1" fill="#0000FF"/><rect x="48" y="375" width="418" height="1" fill="#0000FF"/><rect x="45" y="375" width="3" height="1" fill="#0000FF"/><rect x="48" y="389" width="418" height="1" fill="#0000C0"/><rect x="46" y="389" width="2" height="1" fill="#0000FF"/><rect x="48" y="402" width="418" height="1" fill="#0000FF"/><rect x="45" y="402" width="3" height="1" fill="#0000FF"/><rect x="48" y="415" width="418" height="1" fill="#0000C0"/><rect x="46" y="415" width="2" height="1" fill="#0000FF"/><rect x="48" y="428" width="418" height="1" fill="#0000FF"/><rect x="45" y="428" width="3" height="1" fill="#0000FF"/><rect x="466" y="295" width="4" height="1" fill="#0000FF"/><rect x="466" y="309" width="2" height="1" fill="#0000FF"/><rect x="466" y="322" width="4" height="1" fill="#0000FF"/><rect x="466" y="335" width="2" height="1" fill="#0000FF"/><rect x="466" y="349" width="4" height="1" fill="#0000FF"/><rect x="466" y="362" width="2" height="1" fill="#0000FF"/><rect x="466" y="375" width="4" height="1" fill="#0000FF"/><rect x="466" y="389" width="2" height="1" fill="#0000FF"/><rect x="466" y="402" width="4" height="1" fill="#0000FF"/><rect x="466" y="415" width="2" height="1" fill="#0000FF"/><rect x="466" y="428" width="4" height="1" fill="#0000FF"/><path d="M48 266V181H49V183H50V172H51V177H52V178H53V165H54V193H55V182H56V188H57V186H58V170H59V185H60V184H61V168H62V177H63V186H64V185H65V183H66V163H67V177H68V192H69V187H70V163H71V188H72V186H73V185H74V195H75V168H76V175H77V187H78V186H79V187H80V175H81V189H82V188H83V174H84V190H85V187H86V174H87V181H88V186H89V173H90V185H91V173H92V182H93V191H94V191H95V180H96V198H97V188H98V186H99V182H100V189H101V184H102V197H103V192H104V191H105V189H106V193H107V193H108V198H109V181H110V178H111V190H112V191H113V191H114V188H115V172H116V178H117V189H118V199H119V179H120V201H121V194H122V192H123V195H124V166H125V197H126V197H127V201H128V201H129V195H130V185H131V203H132V199H133V185H134V205H135V205H136V199H137V208H138V201H139V197H140V204H141V206H142V204H143V202H144V202H145V206H146V204H147V206H148V198H149V206H150V205H151V196H152V196H153V204H154V214H155V204H156V203H157V206H158V195H159V206H160V212H161V204H162V206H163V207H164V214H165V204H166V203H167V200H168V202H169V192H170V212H171V207H172V214H173V206H174V204H175V211H176V197H177V202H178V187H179V201H180V207H181V201H182V203H183V206H184V207H185V206H186V206H187V207H188V213H189V208H190V208H191V205H192V208H193V205H194V202H195V204H196V200H197V208H198V199H199V205H200V208H201V190H202V213H203V208H204V203H205V206H206V203H207V204H208V206H209V203H210V207H211V184H212V208H213V204H214V198H215V205H216V215H217V206H218V193H219V207H220V205H221V206H222V192H223V208H224V196H225V196H226V212H227V208H228V205H229V206H230V205H231V205H232V204H233V206H234V206H235V206H236V206H237V207H238V203H239V205H240V207H241V208H242V213H243V209H244V197H245V208H246V213H247V205H248V199H249V204H250V196H251V206H252V203H253V201H254V201H255V188H256V205H257V187H258V201H259V201H260V204H261V199H262V201H263V200H264V202H265V201H266V203H267V204H268V204H269V208H270V201H271V180H272V192H273V203H274V203H275V197H276V203H277V203H278V203H279V202H280V200H281V198H282V191H283V201H284V201H285V198H286V201H287V200H288V152H289V199H290V197H291V198H292V201H293V199H294V200H295V199H296V197H297V196H298V198H299V196H300V195H301V198H302V196H303V197H304V201H305V195H306V197H307V167H308V197H309V200H310V178H311V188H312V188H313V191H314V192H315V193H316V179H317V189H318V186H319V195H320V186H321V178H322V180H323V186H324V187H325V185H326V192H327V186H328V192H329V185H330V176H331V171H332V183H333V185H334V195H335V187H336V188H337V186H338V184H339V186H340V187H341V185H342V186H343V187H344V181H345V188H346V189H347V190H348V189H349V179H350V191H351V194H352V197H353V191H354V191H355V190H356V194H357V193H358V200H359V173H360V191H361V192H362V194H363V193H364V191H365V200H366V196H367V192H368V187H369V194H370V193H371V203H372V196H373V194H374V193H375V196H376V196H377V197H378V202H379V187H380V182H381V195H382V193H383V196H384V194H385V196H386V175H387V193H388V191H389V196H390V195H391V192H392V177H393V194H394V195H395V200H396V196H397V193H398V190H399V193H400V178H401V193H402V194H403V194H404V187H405V179H406V194H407V192H408V181H409V193H410V177H411V196H412V194H413V199H414V184H415V197H416V184H417V198H418V200H419V207H420V201H421V200H422V203H423V204H424V214H425V207H426V203H427V216H428V205H429V206H430V217H431V207H432V208H433V208H434V211H435V207H436V211H437V203H438V208H439V266Z" fill="#00FFFF"/><rect x="48" y="215" width="390" height="2" fill="#00C000"/><rect x="48" y="215" width="1" height="8" fill="#00C000"/><rect x="438" y="133" width="1" height="133" fill="#D8D8D8"/><path d="M48 428V388H49V421H50V421H51V421H52V388H53V415H54V421H55V421H56V421H57V421H58V415H59V395H60V421H61V421H62V415H63V421H64V421H65V401H66V421H67V421H68V421H69V421H70V421H71V421H72V408H73V421H74V401H75V415H76V421H77V421H78V401H79V421H80V421H81V415H82V401H83V415H84V421H85V428H86V401H87V428H88V421H89V401H90V395H91V421H92V388H93V388H94V415H95V395H96V401H97V408H98V408H99V421H100V395H101V428H102V415H103V421H104V421H105V428H106V421H107V421H108V421H109V395H110V421H111V415H112V421H113V421H114V421H115V415H116V401H117V421H118V421H119V395H120V421H121V421H122V401H123V415H124V421H125V421H126V428H127V421H128V421H129V415H130V421H131V395H132V415H133V415H134V421H135V421H136V415H137V408H138V388H139V421H140V421H141V428H142V401H143V421H144V415H145V421H146V421H147V415H148V421H149V421H150V421H151V421H152V421H153V421H154V421H155V395H156V421H157V421H158V421H159V421H160V421H161V421H162V401H163V421H164V415H165V408H166V421H167V421H168V421H169V421H170V421H171V415H172V401H173V428H174V421H175V421H176V408H177V421H178V421H179V428H180V395H181V408H182V421H183V401H184V421H185V401H186V421H187V388H188V388H189V421H190V428H191V395H192V401H193V421H194V421H195V408H196V421H197V421H198V421H199V428H200V421H201V421H202V401H203V428H204V421H205V428H206V421H207V421H208V415H209V421H210V421H211V421H212V421H213V421H214V421H215V421H216V421H217V421H218V421H219V421H220V415H221V421H222V421H223V421H224V415H225V401H226V421H227V421H228V421H229V421H230V421H231V421H232V421H233V408H234V421H235V428H236V421H237V421H238V395H239V428H240V421H241V421H242V421H243V428H244V421H245V421H246V421H247V421H248V415H249V421H250V421H251V421H252V415H253V421H254V421H255V421H256V421H257V415H258V421H259V421H260V408H261V421H262V415H263V421H264V421H265V421H266V421H267V415H268V421H269V421H270V421H271V421H272V415H273V421H274V415H275V421H276V421H277V421H278V421H279V421H280V421H281V421H282V421H283V388H284V421H285V421H286V421H287V421H288V421H289V401H290V421H291V421H292V421H293V415H294V421H295V421H296V415H297V421H298V421H299V395H300V421H301V415H302V421H303V415H304V421H305V421H306V421H307V421H308V421H309V421H310V415H311V415H312V421H313V421H314V421H315V401H316V415H317V421H318V415H319V421H320V421H321V421H322V421H323V421H324V421H325V428H326V421H327V421H328V415H329V388H330V415H331V428H332V428H333V421H334V421H335V421H336V421H337V415H338V395H339V421H340V421H341V421H342V421H343V421H344V421H345V421H346V415H347V401H348V408H349V428H350V388H351V401H352V421H353V421H354V428H355V415H356V421H357V421H358V421H359V421H360V415H361V421H362V421H363V395H364V421H365V421H366V388H367V421H368V421H369V395H370V421H371V428H372V408H373V421H374V395H375V421H376V421H377V415H378V401H379V421H380V421H381V421H382V421H383V408H384V401H385V408H386V421H387V421H388V408H389V421H390V401H391V408H392V428H393V421H394V421H395V421H396V421H397V421H398V421H399V421H400V415H401V421H402V421H403V421H404V415H405V401H406V421H407V421H408V415H409V415H410V421H411V408H412V421H413V408H414V421H415V421H416V421H417V421H418V401H419V421H420V415H421V421H422V421H423V421H424V421H425V421H426V421H427V421H428V415H429V415H430V388H431V421H432V421H433V428H434V421H435V421H436V421H437V428H438V421H439V428Z" fill="#00FF00"/><path d="M197 428V382H198V368H199V355H200V368H201V382H202V428Z" fill="#A0E820"/><path d="M48.5 358L48.5 348L49.5 347.2L50.5 346.9L51.5 347.4L52.5 349.1L53.5 345.8L54.5 351.0L55.5 350.6L56.5 348.8L57.5 350.3L58.5 346.5L59.5 346.5L60.5 346.9L61.5 347.4L62.5 350.6L63.5 348.1L64.5 347.6L65.5 347.3L66.5 347.9L67.5 347.5L68.5 348.1L69.5 345.7L70.5 347.0L71.5 349.0L72.5 346.2L73.5 347.6L74.5 349.7L75.5 346.7L76.5 347.8L77.5 348.0L78.5 347.5L79.5 347.6L80.5 348.6L81.5 347.0L82.5 345.2L83.5 350.1L84.5 347.6L85.5 349.9L86.5 347.5L87.5 347.2L88.5 347.6L89.5 349.5L90.5 344.5L91.5 348.1L92.5 349.0L93.5 350.5L94.5 347.0L95.5 343.1L96.5 348.3L97.5 347.3L98.5 347.7L99.5 347.7L100.5 348.6L101.5 351.0L102.5 346.5L103.5 347.9L104.5 346.3L105.5 347.1L106.5 346.8L107.5 347.4L108.5 349.6L109.5 347.1L110.5 347.7L111.5 350.2L112.5 347.8L113.5 348.8L114.5 347.7L115.5 346.0L116.5 346.6L117.5 347.7L118.5 347.7L119.5 346.3L120.5 347.0L121.5 349.2L122.5 346.7L123.5 346.7L124.5 347.5L125.5 345.6L126.5 348.6L127.5 347.9L128.5 349.2L129.5 346.8L130.5 350.0L131.5 347.4L132.5 346.2L133.5 347.7L134.5 350.7L135.5 349.0L136.5 346.0L137.5 347.3L138.5 343.7L139.5 347.6L140.5 345.9L141.5 347.3L142.5 349.0L143.5 349.2L144.5 347.7L145.5 353.0L146.5 346.5L147.5 349.2L148.5 350.0L149.5 348.3L150.5 348.9L151.5 348.8L152.5 349.1L153.5 347.6L154.5 349.2L155.5 350.7L156.5 350.2L157.5 347.4L158.5 351.3L159.5 347.8L160.5 348.1L161.5 349.0L162.5 346.6L163.5 348.8L164.5 352.4L165.5 347.9L166.5 348.3L167.5 347.9L168.5 350.6L169.5 349.2L170.5 348.0L171.5 349.5L172.5 346.0L173.5 346.0L174.5 346.8L175.5 349.3L176.5 346.0L177.5 346.1L178.5 345.3L179.5 346.7L180.5 346.4L181.5 348.1L182.5 349.0L183.5 349.2L184.5 349.2L185.5 347.8L186.5 350.5L187.5 348.9L188.5 347.3L189.5 346.0L190.5 349.5L191.5 349.7L192.5 350.6L193.5 347.7L194.5 348.0L195.5 349.2L196.5 346.5L197.5 346.3L198.5 345.2L199.5 349.1L200.5 347.1L201.5 351.0L202.5 348.2L203.5 348.6L204.5 347.6L205.5 348.0L206.5 349.1L207.5 347.2L208.5 344.2L209.5 348.5L210.5 349.4L211.5 349.0L212.5 346.6L213.5 348.5L214.5 349.7L215.5 350.8L216.5 348.3L217.5 347.0L218.5 349.1L219.5 347.9L220.5 346.2L221.5 349.0L222.5 347.9L223.5 344.3L224.5 347.7L225.5 347.7L226.5 345.8L227.5 347.2L228.5 347.1L229.5 347.6L230.5 348.4L231.5 351.2L232.5 349.6L233.5 346.3L234.5 346.3L235.5 347.3L236.5 347.6L237.5 347.5L238.5 349.5L239.5 352.1L240.5 346.8L241.5 352.1L242.5 347.9L243.5 347.1L244.5 348.2L245.5 348.5L246.5 347.7L247.5 348.3L248.5 347.0L249.5 346.4L250.5 346.0L251.5 348.4L252.5 347.2L253.5 346.5L254.5 345.4L255.5 348.5L256.5 346.4L257.5 350.7L258.5 347.9L259.5 346.4L260.5 345.8L261.5 345.3L262.5 348.5L263.5 348.3L264.5 350.5L265.5 346.3L266.5 343.8L267.5 347.2L268.5 346.3L269.5 349.0L270.5 345.3L271.5 346.5L272.5 349.8L273.5 347.2L274.5 349.7L275.5 347.5L276.5 347.5L277.5 348.7L278.5 347.4L279.5 347.5L280.5 349.5L281.5 349.8L282.5 349.1L283.5 346.3L284.5 351.4L285.5 346.6L286.5 347.7L287.5 346.0L288.5 346.8L289.5 348.2L290.5 348.6L291.5 347.4L292.5 350.1L293.5 345.2L294.5 346.5L295.5 348.7L296.5 349.6L297.5 348.2L298.5 346.9L299.5 346.4L300.5 349.1L301.5 346.1L302.5 346.4L303.5 348.7L304.5 347.9L305.5 349.6L306.5 346.8L307.5 347.1L308.5 347.0L309.5 346.9L310.5 348.0L311.5 350.7L312.5 349.5L313.5 347.6L314.5 347.3L315.5 349.2L316.5 349.1L317.5 348.8L318.5 346.4L319.5 346.3L320.5 347.4L321.5 350.1L322.5 346.6L323.5 348.0L324.5 349.0L325.5 345.9L326.5 346.5L327.5 348.8L328.5 349.2L329.5 347.4L330.5 346.2L331.5 347.5L332.5 349.7L333.5 341.6L334.5 351.2L335.5 347.5L336.5 347.1L337.5 346.5L338.5 349.8L339.5 348.5L340.5 348.1L341.5 347.5L342.5 342.1L343.5 348.3L344.5 347.3L345.5 345.3L346.5 348.3L347.5 348.7L348.5 348.9L349.5 347.3L350.5 348.4L351.5 349.9L352.5 349.3L353.5 346.5L354.5 350.3L355.5 344.7L356.5 346.8L357.5 347.7L358.5 349.4L359.5 348.0L360.5 348.5L361.5 347.6L362.5 349.5L363.5 346.6L364.5 348.1L365.5 351.2L366.5 347.7L367.5 347.4L368.5 348.9L369.5 347.2L370.5 348.0L371.5 348.9L372.5 350.4L373.5 351.0L374.5 351.1L375.5 352.6L376.5 350.8L377.5 346.4L378.5 349.2L379.5 346.3L380.5 349.2L381.5 347.4L382.5 348.5L383.5 350.8L384.5 348.9L385.5 345.3L386.5 348.4L387.5 349.8L388.5 348.7L389.5 346.5L390.5 347.6L391.5 349.4L392.5 349.9L393.5 346.8L394.5 345.0L395.5 348.4L396.5 348.2L397.5 346.5L398.5 346.3L399.5 349.1L400.5 350.1L401.5 349.1L402.5 346.8L403.5 351.0L404.5 350.2L405.5 351.2L406.5 348.3L407.5 348.9L408.5 349.1L409.5 347.2L410.5 344.9L411.5 348.2L412.5 348.4L413.5 350.1L414.5 348.3L415.5 344.9L416.5 346.3L417.5 346.1L418.5 348.0L419.5 349.2L420.5 345.5L421.5 345.8L422.5 349.2L423.5 347.5L424.5 348.3L425.5 347.1L426.5 346.1L427.5 350.3L428.5 347.9L429.5 349.5L430.5 350.3L431.5 347.4L432.5 347.8L433.5 344.6L434.5 348.6L435.5 346.8L436.5 346.8L437.5 350.4L438.5 348.1" fill="none" stroke="#FF00FF" stroke-width="1.6" shape-rendering="auto"/><rect x="438" y="295" width="1" height="133" fill="#D8D8D8"/></svg>
<div style="position:absolute;left:492px;top:127px;width:139px;height:84px;box-sizing:border-box;border:1px solid #fff"></div>
<div style="position:absolute;left:491px;top:126px;width:139px;height:84px;box-sizing:border-box;border:1px solid #808080"></div>
<div style="position:absolute;left:497px;top:120px;width:46px;height:13px;background:#D4D0C8"></div>
<div style="position:absolute;left:500px;top:121px;font:normal 11px/13px 'Liberation Sans', sans-serif;color:#000;white-space:pre;">Disc info</div>
<div style="position:absolute;left:500px;top:136px;font:normal 11px/13px 'Liberation Sans', sans-serif;color:#000;white-space:pre;">Type:</div>
<div style="position:absolute;left:545px;top:136px;font:normal 11px/13px 'Liberation Sans', sans-serif;color:#000080;white-space:pre;">DVD-RW</div>
<div style="position:absolute;left:500px;top:154px;font:normal 11px/13px 'Liberation Sans', sans-serif;color:#000;white-space:pre;">ID:</div>
<div style="position:absolute;left:545px;top:154px;font:normal 11px/13px 'Liberation Sans', sans-serif;color:#000080;white-space:pre;">TDK601saku</div>
<div style="position:absolute;left:500px;top:171px;font:normal 11px/13px 'Liberation Sans', sans-serif;color:#000;white-space:pre;">Date:</div>
<div style="position:absolute;left:545px;top:171px;font:normal 11px/13px 'Liberation Sans', sans-serif;color:#000080;white-space:pre;">n/a</div>
<div style="position:absolute;left:500px;top:189px;font:normal 11px/13px 'Liberation Sans', sans-serif;color:#000;white-space:pre;">Label:</div>
<div style="position:absolute;left:545px;top:189px;font:normal 11px/13px 'Liberation Sans', sans-serif;color:#000080;white-space:pre;">n/a</div>
<div style="position:absolute;left:492px;top:218px;width:139px;height:204px;box-sizing:border-box;border:1px solid #fff"></div>
<div style="position:absolute;left:491px;top:217px;width:139px;height:204px;box-sizing:border-box;border:1px solid #808080"></div>
<div style="position:absolute;left:497px;top:210px;width:44px;height:13px;background:#D4D0C8"></div>
<div style="position:absolute;left:500px;top:211px;font:normal 11px/13px 'Liberation Sans', sans-serif;color:#000;white-space:pre;">Settings</div>
<div style="position:absolute;left:500px;top:227px;font:normal 11px/13px 'Liberation Sans', sans-serif;color:#000;white-space:pre;">Speed:</div>
<div style="position:absolute;left:500px;top:242px;width:84px;height:21px;box-sizing:border-box;border-style:solid;border-width:1px;border-color:#808080 #fff #fff #808080;background:#fff"><div style="position:absolute;left:0;top:0;right:0;bottom:0;border-style:solid;border-width:1px;border-color:#404040 #D4D0C8 #D4D0C8 #404040"></div></div>
<div style="position:absolute;left:504px;top:247px;font:normal 11px/13px 'Liberation Sans', sans-serif;color:#000;white-space:pre;">6 X CLV</div>
<div style="position:absolute;left:572px;top:244px;width:10px;height:17px;box-sizing:border-box;border-style:solid;border-width:1px;border-color:#fff #404040 #404040 #fff;background:#D4D0C8"><div style="position:absolute;left:0;top:0;right:0;bottom:0;border-style:solid;border-width:1px;border-color:#D4D0C8 #808080 #808080 #D4D0C8"></div><svg style="position:absolute;left:1px;top:6px" width="6" height="4"><path d="M0 0h5L2.5 3Z" fill="#000"/></svg></div>
<div style="position:absolute;left:592px;top:240px;width:23px;height:23px;box-sizing:border-box;border-style:solid;border-width:1px;border-color:#fff #404040 #404040 #fff;background:#D4D0C8"><div style="position:absolute;left:0;top:0;right:0;bottom:0;border-style:solid;border-width:1px;border-color:#D4D0C8 #808080 #808080 #D4D0C8"></div><div style="position:absolute;left:3px;top:2px;width:14px;height:16px;box-sizing:border-box;border:1px solid #000;background:#fff"></div><svg style="position:absolute;left:-593px;top:-241px" width="641" height="300" viewBox="0 0 641 300"><path d="M599.5 251V248.5H603M606.5 252V254.5H602" stroke="#00A000" stroke-width="1.4" fill="none"/><path d="M602.5 245.5L606 248.5L602.5 251.5ZM602.5 251.5L599 254.5L602.5 257.5Z" fill="#00A000"/></svg></div>
<div style="position:absolute;left:502px;top:274px;font:normal 11px/13px 'Liberation Sans', sans-serif;color:#000;white-space:pre;">Start:</div>
<div style="position:absolute;left:554px;top:268px;width:60px;height:20px;box-sizing:border-box;border-style:solid;border-width:1px;border-color:#808080 #fff #fff #808080;background:#fff"><div style="position:absolute;left:0;top:0;right:0;bottom:0;border-style:solid;border-width:1px;border-color:#404040 #D4D0C8 #D4D0C8 #404040"></div></div>
<div style="position:absolute;left:557px;top:272px;font:normal 11px/13px 'Liberation Sans', sans-serif;color:#000;white-space:pre;">0000 MB</div>
<div style="position:absolute;left:502px;top:296px;font:normal 11px/13px 'Liberation Sans', sans-serif;color:#000;white-space:pre;">End:</div>
<div style="position:absolute;left:554px;top:291px;width:60px;height:20px;box-sizing:border-box;border-style:solid;border-width:1px;border-color:#808080 #fff #fff #808080;background:#fff"><div style="position:absolute;left:0;top:0;right:0;bottom:0;border-style:solid;border-width:1px;border-color:#404040 #D4D0C8 #D4D0C8 #404040"></div></div>
<div style="position:absolute;left:557px;top:295px;font:normal 11px/13px 'Liberation Sans', sans-serif;color:#000;white-space:pre;">4305 MB</div>
<div style="position:absolute;left:502px;top:317px;width:13px;height:13px;box-sizing:border-box;border-style:solid;border-width:1px;border-color:#808080 #fff #fff #808080;background:#fff"><div style="position:absolute;left:0;top:0;right:0;bottom:0;border-style:solid;border-width:1px;border-color:#404040 #D4D0C8 #D4D0C8 #404040"></div></div>
<div style="position:absolute;left:521px;top:317px;font:11px/13px 'Liberation Sans', sans-serif;color:#000;white-space:pre;">Quick scan</div>
<div style="position:absolute;left:502px;top:338px;width:13px;height:13px;box-sizing:border-box;border-style:solid;border-width:1px;border-color:#808080 #fff #fff #808080;background:#fff"><div style="position:absolute;left:0;top:0;right:0;bottom:0;border-style:solid;border-width:1px;border-color:#404040 #D4D0C8 #D4D0C8 #404040"></div><svg style="position:absolute;left:2px;top:2px" width="7" height="7" fill="#000" shape-rendering="crispEdges"><rect x="6" y="0" width="1" height="1"/><rect x="5" y="1" width="1" height="1"/><rect x="6" y="1" width="1" height="1"/><rect x="0" y="2" width="1" height="1"/><rect x="4" y="2" width="1" height="1"/><rect x="5" y="2" width="1" height="1"/><rect x="6" y="2" width="1" height="1"/><rect x="0" y="3" width="1" height="1"/><rect x="1" y="3" width="1" height="1"/><rect x="3" y="3" width="1" height="1"/><rect x="4" y="3" width="1" height="1"/><rect x="5" y="3" width="1" height="1"/><rect x="0" y="4" width="1" height="1"/><rect x="1" y="4" width="1" height="1"/><rect x="2" y="4" width="1" height="1"/><rect x="3" y="4" width="1" height="1"/><rect x="4" y="4" width="1" height="1"/><rect x="1" y="5" width="1" height="1"/><rect x="2" y="5" width="1" height="1"/><rect x="3" y="5" width="1" height="1"/><rect x="2" y="6" width="1" height="1"/></svg></div>
<div style="position:absolute;left:521px;top:338px;font:11px/13px 'Liberation Sans', sans-serif;color:#000;white-space:pre;">Show C1/PIE</div>
<div style="position:absolute;left:502px;top:354px;width:13px;height:13px;box-sizing:border-box;border-style:solid;border-width:1px;border-color:#808080 #fff #fff #808080;background:#fff"><div style="position:absolute;left:0;top:0;right:0;bottom:0;border-style:solid;border-width:1px;border-color:#404040 #D4D0C8 #D4D0C8 #404040"></div><svg style="position:absolute;left:2px;top:2px" width="7" height="7" fill="#000" shape-rendering="crispEdges"><rect x="6" y="0" width="1" height="1"/><rect x="5" y="1" width="1" height="1"/><rect x="6" y="1" width="1" height="1"/><rect x="0" y="2" width="1" height="1"/><rect x="4" y="2" width="1" height="1"/><rect x="5" y="2" width="1" height="1"/><rect x="6" y="2" width="1" height="1"/><rect x="0" y="3" width="1" height="1"/><rect x="1" y="3" width="1" height="1"/><rect x="3" y="3" width="1" height="1"/><rect x="4" y="3" width="1" height="1"/><rect x="5" y="3" width="1" height="1"/><rect x="0" y="4" width="1" height="1"/><rect x="1" y="4" width="1" height="1"/><rect x="2" y="4" width="1" height="1"/><rect x="3" y="4" width="1" height="1"/><rect x="4" y="4" width="1" height="1"/><rect x="1" y="5" width="1" height="1"/><rect x="2" y="5" width="1" height="1"/><rect x="3" y="5" width="1" height="1"/><rect x="2" y="6" width="1" height="1"/></svg></div>
<div style="position:absolute;left:521px;top:354px;font:11px/13px 'Liberation Sans', sans-serif;color:#000;white-space:pre;">Show C2/PIF</div>
<div style="position:absolute;left:502px;top:370px;width:13px;height:13px;box-sizing:border-box;border-style:solid;border-width:1px;border-color:#808080 #fff #fff #808080;background:#fff"><div style="position:absolute;left:0;top:0;right:0;bottom:0;border-style:solid;border-width:1px;border-color:#404040 #D4D0C8 #D4D0C8 #404040"></div><svg style="position:absolute;left:2px;top:2px" width="7" height="7" fill="#000" shape-rendering="crispEdges"><rect x="6" y="0" width="1" height="1"/><rect x="5" y="1" width="1" height="1"/><rect x="6" y="1" width="1" height="1"/><rect x="0" y="2" width="1" height="1"/><rect x="4" y="2" width="1" height="1"/><rect x="5" y="2" width="1" height="1"/><rect x="6" y="2" width="1" height="1"/><rect x="0" y="3" width="1" height="1"/><rect x="1" y="3" width="1" height="1"/><rect x="3" y="3" width="1" height="1"/><rect x="4" y="3" width="1" height="1"/><rect x="5" y="3" width="1" height="1"/><rect x="0" y="4" width="1" height="1"/><rect x="1" y="4" width="1" height="1"/><rect x="2" y="4" width="1" height="1"/><rect x="3" y="4" width="1" height="1"/><rect x="4" y="4" width="1" height="1"/><rect x="1" y="5" width="1" height="1"/><rect x="2" y="5" width="1" height="1"/><rect x="3" y="5" width="1" height="1"/><rect x="2" y="6" width="1" height="1"/></svg></div>
<div style="position:absolute;left:521px;top:370px;font:11px/13px 'Liberation Sans', sans-serif;color:#000;white-space:pre;">Show jitter</div>
<div style="position:absolute;left:502px;top:386px;width:13px;height:13px;box-sizing:border-box;border-style:solid;border-width:1px;border-color:#808080 #fff #fff #808080;background:#fff"><div style="position:absolute;left:0;top:0;right:0;bottom:0;border-style:solid;border-width:1px;border-color:#404040 #D4D0C8 #D4D0C8 #404040"></div><svg style="position:absolute;left:2px;top:2px" width="7" height="7" fill="#000" shape-rendering="crispEdges"><rect x="6" y="0" width="1" height="1"/><rect x="5" y="1" width="1" height="1"/><rect x="6" y="1" width="1" height="1"/><rect x="0" y="2" width="1" height="1"/><rect x="4" y="2" width="1" height="1"/><rect x="5" y="2" width="1" height="1"/><rect x="6" y="2" width="1" height="1"/><rect x="0" y="3" width="1" height="1"/><rect x="1" y="3" width="1" height="1"/><rect x="3" y="3" width="1" height="1"/><rect x="4" y="3" width="1" height="1"/><rect x="5" y="3" width="1" height="1"/><rect x="0" y="4" width="1" height="1"/><rect x="1" y="4" width="1" height="1"/><rect x="2" y="4" width="1" height="1"/><rect x="3" y="4" width="1" height="1"/><rect x="4" y="4" width="1" height="1"/><rect x="1" y="5" width="1" height="1"/><rect x="2" y="5" width="1" height="1"/><rect x="3" y="5" width="1" height="1"/><rect x="2" y="6" width="1" height="1"/></svg></div>
<div style="position:absolute;left:521px;top:386px;font:11px/13px 'Liberation Sans', sans-serif;color:#000;white-space:pre;">Show read speed</div>
<div style="position:absolute;left:502px;top:402px;width:13px;height:13px;box-sizing:border-box;border-style:solid;border-width:1px;border-color:#808080 #fff #fff #808080;background:#D4D0C8"><div style="position:absolute;left:0;top:0;right:0;bottom:0;border-style:solid;border-width:1px;border-color:#404040 #D4D0C8 #D4D0C8 #404040"></div><svg style="position:absolute;left:2px;top:2px" width="7" height="7" fill="#808080" shape-rendering="crispEdges"><rect x="6" y="0" width="1" height="1"/><rect x="5" y="1" width="1" height="1"/><rect x="6" y="1" width="1" height="1"/><rect x="0" y="2" width="1" height="1"/><rect x="4" y="2" width="1" height="1"/><rect x="5" y="2" width="1" height="1"/><rect x="6" y="2" width="1" height="1"/><rect x="0" y="3" width="1" height="1"/><rect x="1" y="3" width="1" height="1"/><rect x="3" y="3" width="1" height="1"/><rect x="4" y="3" width="1" height="1"/><rect x="5" y="3" width="1" height="1"/><rect x="0" y="4" width="1" height="1"/><rect x="1" y="4" width="1" height="1"/><rect x="2" y="4" width="1" height="1"/><rect x="3" y="4" width="1" height="1"/><rect x="4" y="4" width="1" height="1"/><rect x="1" y="5" width="1" height="1"/><rect x="2" y="5" width="1" height="1"/><rect x="3" y="5" width="1" height="1"/><rect x="2" y="6" width="1" height="1"/></svg></div>
<div style="position:absolute;left:521px;top:402px;font:11px/13px 'Liberation Sans', sans-serif;color:#808080;white-space:pre;text-shadow:1px 1px 0 #fff">Show write speed</div>
<div style="position:absolute;left:492px;top:428px;width:139px;height:26px;box-sizing:border-box;border:1px solid #fff"></div>
<div style="position:absolute;left:491px;top:427px;width:139px;height:26px;box-sizing:border-box;border:1px solid #808080"></div>
<div style="position:absolute;left:502px;top:435px;font:normal 11px/13px 'Liberation Sans', sans-serif;color:#000;white-space:pre;">Quality score:</div>
<div style="position:absolute;right:20px;top:435px;font:normal 11px/13px 'Liberation Sans', sans-serif;color:#000080;white-space:pre;text-align:right;">94</div>
<div style="position:absolute;left:492px;top:460px;width:139px;height:56px;box-sizing:border-box;border:1px solid #fff"></div>
<div style="position:absolute;left:491px;top:459px;width:139px;height:56px;box-sizing:border-box;border:1px solid #808080"></div>
<div style="position:absolute;left:502px;top:469px;font:normal 11px/13px 'Liberation Sans', sans-serif;color:#000;white-space:pre;">Progress:</div>
<div style="position:absolute;right:20px;top:469px;font:normal 11px/13px 'Liberation Sans', sans-serif;color:#000080;white-space:pre;text-align:right;">100 %</div>
<div style="position:absolute;left:502px;top:484px;font:normal 11px/13px 'Liberation Sans', sans-serif;color:#000;white-space:pre;">Position:</div>
<div style="position:absolute;right:20px;top:484px;font:normal 11px/13px 'Liberation Sans', sans-serif;color:#000080;white-space:pre;text-align:right;">4304 MB</div>
<div style="position:absolute;left:502px;top:499px;font:normal 11px/13px 'Liberation Sans', sans-serif;color:#000;white-space:pre;">Speed:</div>
<div style="position:absolute;right:20px;top:499px;font:normal 11px/13px 'Liberation Sans', sans-serif;color:#000080;white-space:pre;text-align:right;">5.91 X</div>
<div style="position:absolute;left:15px;top:461px;width:146px;height:56px;box-sizing:border-box;border:1px solid #fff"></div>
<div style="position:absolute;left:14px;top:460px;width:146px;height:56px;box-sizing:border-box;border:1px solid #808080"></div>
<div style="position:absolute;left:22px;top:453px;height:13px;padding:0 1px 0 13px;background:#D4D0C8;font:11px/13px 'Liberation Sans', sans-serif;white-space:pre">PI Errors</div>
<div style="position:absolute;left:24px;top:456px;width:8px;height:8px;box-sizing:border-box;border:1px solid #000;background:#00FFFF"></div>
<div style="position:absolute;left:22px;top:470px;font:normal 11px/13px 'Liberation Sans', sans-serif;color:#000;white-space:pre;">Average:</div>
<div style="position:absolute;right:490px;top:470px;font:normal 11px/13px 'Liberation Sans', sans-serif;color:#000080;white-space:pre;text-align:right;">37.83</div>
<div style="position:absolute;left:22px;top:485px;font:normal 11px/13px 'Liberation Sans', sans-serif;color:#000;white-space:pre;">Maximum:</div>
<div style="position:absolute;right:490px;top:485px;font:normal 11px/13px 'Liberation Sans', sans-serif;color:#000080;white-space:pre;text-align:right;">86</div>
<div style="position:absolute;left:22px;top:500px;font:normal 11px/13px 'Liberation Sans', sans-serif;color:#000;white-space:pre;">Total:</div>
<div style="position:absolute;right:490px;top:500px;font:normal 11px/13px 'Liberation Sans', sans-serif;color:#000080;white-space:pre;text-align:right;">532619</div>
<div style="position:absolute;left:173px;top:461px;width:147px;height:56px;box-sizing:border-box;border:1px solid #fff"></div>
<div style="position:absolute;left:172px;top:460px;width:147px;height:56px;box-sizing:border-box;border:1px solid #808080"></div>
<div style="position:absolute;left:180px;top:453px;height:13px;padding:0 1px 0 13px;background:#D4D0C8;font:11px/13px 'Liberation Sans', sans-serif;white-space:pre">PI Failures</div>
<div style="position:absolute;left:182px;top:456px;width:8px;height:8px;box-sizing:border-box;border:1px solid #000;background:#FFFF00"></div>
<div style="position:absolute;left:181px;top:470px;font:normal 11px/13px 'Liberation Sans', sans-serif;color:#000;white-space:pre;">Average:</div>
<div style="position:absolute;right:332px;top:470px;font:normal 11px/13px 'Liberation Sans', sans-serif;color:#000080;white-space:pre;text-align:right;">0.53</div>
<div style="position:absolute;left:181px;top:485px;font:normal 11px/13px 'Liberation Sans', sans-serif;color:#000;white-space:pre;">Maximum:</div>
<div style="position:absolute;right:332px;top:485px;font:normal 11px/13px 'Liberation Sans', sans-serif;color:#000080;white-space:pre;text-align:right;">11</div>
<div style="position:absolute;left:181px;top:500px;font:normal 11px/13px 'Liberation Sans', sans-serif;color:#000;white-space:pre;">Total:</div>
<div style="position:absolute;right:332px;top:500px;font:normal 11px/13px 'Liberation Sans', sans-serif;color:#000080;white-space:pre;text-align:right;">4382</div>
<div style="position:absolute;left:332px;top:461px;width:147px;height:42px;box-sizing:border-box;border:1px solid #fff"></div>
<div style="position:absolute;left:331px;top:460px;width:147px;height:42px;box-sizing:border-box;border:1px solid #808080"></div>
<div style="position:absolute;left:339px;top:453px;height:13px;padding:0 1px 0 13px;background:#D4D0C8;font:11px/13px 'Liberation Sans', sans-serif;white-space:pre">Jitter</div>
<div style="position:absolute;left:341px;top:456px;width:8px;height:8px;box-sizing:border-box;border:1px solid #000;background:#FF00FF"></div>
<div style="position:absolute;left:340px;top:470px;font:normal 11px/13px 'Liberation Sans', sans-serif;color:#000;white-space:pre;">Average:</div>
<div style="position:absolute;right:173px;top:470px;font:normal 11px/13px 'Liberation Sans', sans-serif;color:#000080;white-space:pre;text-align:right;">11.73 %</div>
<div style="position:absolute;left:340px;top:485px;font:normal 11px/13px 'Liberation Sans', sans-serif;color:#000;white-space:pre;">Maximum:</div>
<div style="position:absolute;right:173px;top:485px;font:normal 11px/13px 'Liberation Sans', sans-serif;color:#000080;white-space:pre;text-align:right;">13.1 %</div>
<div style="position:absolute;left:340px;top:504px;font:normal 11px/13px 'Liberation Sans', sans-serif;color:#000;white-space:pre;">PO failures:</div>
<div style="position:absolute;right:173px;top:504px;font:normal 11px/13px 'Liberation Sans', sans-serif;color:#000080;white-space:pre;text-align:right;">0</div></body></html>
